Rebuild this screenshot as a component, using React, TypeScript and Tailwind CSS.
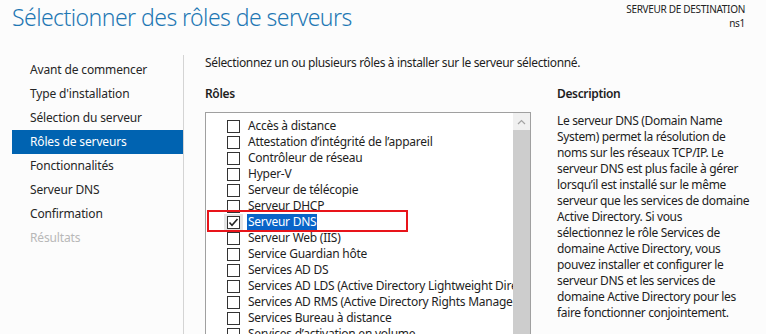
import React from "react";

const font = { fontFamily: '"Segoe UI", "Noto Sans", sans-serif' };

const steps = [
  "Avant de commencer",
  "Type d'installation",
  "Sélection du serveur",
  "Rôles de serveurs",
  "Fonctionnalités",
  "Serveur DNS",
  "Confirmation",
  "Résultats",
];

const roles = [
  "Accès à distance",
  "Attestation d’intégrité de l’appareil",
  "Contrôleur de réseau",
  "Hyper-V",
  "Serveur de télécopie",
  "Serveur DHCP",
  "Serveur DNS",
  "Serveur Web (IIS)",
  "Service Guardian hôte",
  "Services AD DS",
  "Services AD LDS (Active Directory Lightweight Directory Services)",
  "Services AD RMS (Active Directory Rights Management Services)",
  "Services Bureau à distance",
  "Services d’activation en volume",
];

// wrapped as in the wizard's description pane
const description = [
  "Le serveur DNS (Domain Name",
  "System) permet la résolution de",
  "noms sur les réseaux TCP/IP. Le",
  "serveur DNS est plus facile à gérer",
  "lorsqu’il est installé sur le même",
  "serveur que les services de domaine",
  "Active Directory. Si vous",
  "sélectionnez le rôle Services de",
  "domaine Active Directory, vous",
  "pouvez installer et configurer le",
  "serveur DNS et les services de",
  "domaine Active Directory pour les",
  "faire fonctionner conjointement.",
];

function Checkbox({ checked }: { checked?: boolean }) {
  return (
    <div className="w-[13px] h-[13px] shrink-0 border border-[#333] bg-white flex items-center justify-center">
      {checked && (
        <svg width="11" height="11" viewBox="0 0 11 11">
          <path d="M1.5 5.5 L4 8.2 L9.5 2" fill="none" stroke="#222" strokeWidth="1.6" />
        </svg>
      )}
    </div>
  );
}

export default function App() {
  return (
    <div className="w-[766px] h-[334px] overflow-hidden bg-[#fcfcfc] text-[#1e1e1e] text-[12px] leading-[16px]" style={font}>
      <div className="flex justify-between h-[55px]">
        <h1 className="pl-[12px] pt-[1px] text-[23px] leading-[32px] font-light tracking-[-0.55px] text-[#1f78b4]">
          Sélectionner des rôles de serveurs
        </h1>
        <div className="pr-[21px] pt-[2px] text-right text-[10px] leading-[14px] tracking-[-0.3px] text-[#222]">
          <div>SERVEUR DE DESTINATION</div>
          <div>ns1</div>
        </div>
      </div>

      <div className="flex h-[279px]">
        <nav className="ml-[12px] w-[172px] shrink-0 border-r border-[#d4d4d4] pt-[3px] tracking-[-0.15px]">
          {steps.map((s, i) => (
            <div
              key={s}
              className={
                "h-[24px] flex items-center pl-[18px] " +
                (i === 3 ? "bg-[#0063b1] text-white" : i === 7 ? "text-[#b8b8b8]" : "text-[#262626]")
              }
            >
              {s}
            </div>
          ))}
        </nav>

        <main className="flex-1 pl-[21px] tracking-[-0.35px]">
          <p className="h-[16px]">Sélectionnez un ou plusieurs rôles à installer sur le serveur sélectionné.</p>
          <div className="flex mt-[15px]">
            <div className="w-[326px] shrink-0">
              <h2 className="font-semibold h-[16px]">Rôles</h2>
              <div className="mt-[10px] h-[300px] border border-[#a0a0a0] bg-white flex">
                <ul className="flex-1 min-w-0 overflow-hidden pt-[5px] pl-[21px] tracking-[-0.25px]">
                  {roles.map((r) => {
                    const dns = r === "Serveur DNS";
                    return (
                      <li key={r} className="relative h-[16px] flex items-center whitespace-nowrap">
                        <div className={"w-[19px] h-[16px] shrink-0 -ml-[3px] pl-[3px] flex items-center " + (dns ? "bg-[#e5e5e5]" : "")}>
                          <Checkbox checked={dns} />
                        </div>
                        <span className={"ml-[4px] px-[1px] " + (dns ? "bg-[#0a64c8] text-white" : "")}>{r}</span>
                        {dns && (
                          <div className="absolute left-[-20px] top-[-4px] w-[201px] h-[22px] border-2 border-[#e8141a]" />
                        )}
                      </li>
                    );
                  })}
                </ul>
                <div className="w-[17px] shrink-0 flex flex-col">
                  <div className="h-[17px] bg-[#f0f0f0] flex items-center justify-center">
                    <svg width="9" height="6" viewBox="0 0 9 6">
                      <path d="M1 5 L4.5 1.5 L8 5" fill="none" stroke="#a3a3a3" strokeWidth="1.2" />
                    </svg>
                  </div>
                  <div className="flex-1 bg-[#cdcdcd]" />
                </div>
              </div>
            </div>

            <div className="ml-[26px] w-[200px]">
              <h2 className="font-semibold h-[16px]">Description</h2>
              <div className="mt-[11px]">
                {description.map((line) => (
                  <div key={line} className="whitespace-nowrap">{line}</div>
                ))}
              </div>
            </div>
          </div>
        </main>
      </div>
    </div>
  );
}
